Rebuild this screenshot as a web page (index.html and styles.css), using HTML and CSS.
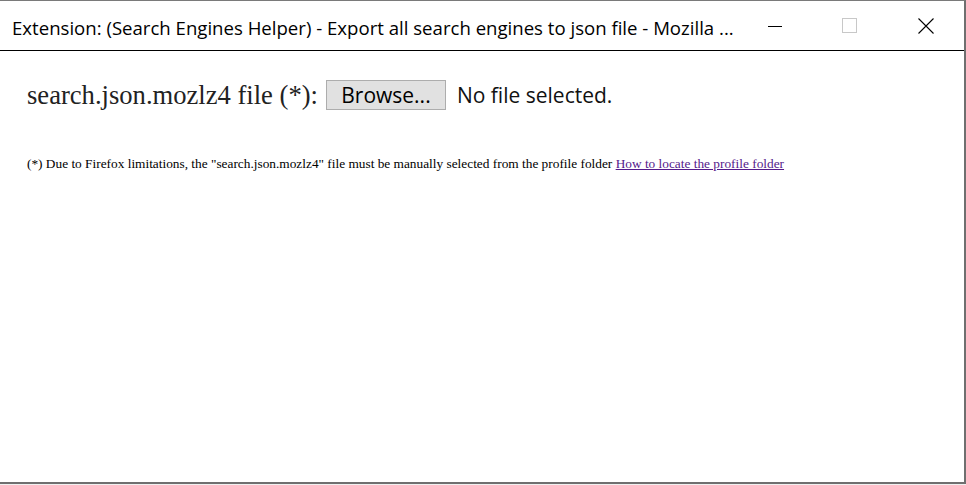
FILE: index.html
```html
<!DOCTYPE html>
<html>
<head>
<meta charset="utf-8">
<link rel="stylesheet" href="styles.css">
</head>
<body>
<div class="window">
  <div class="titlebar">
    <div class="title">Extension: (Search Engines Helper) - Export all search engines to json file - Mozilla ...</div>
    <div class="controls">
      <div class="ctl"><svg width="14" height="14" viewBox="0 0 14 14"><line x1="0" y1="7.5" x2="14" y2="7.5" stroke="#000" stroke-width="1"/></svg></div>
      <div class="ctl"><svg width="15" height="15" viewBox="0 0 15 15"><rect x="0.5" y="0.5" width="14" height="14" fill="none" stroke="#c8c8c8" stroke-width="1"/></svg></div>
      <div class="ctl"><svg width="16" height="16" viewBox="0 0 16 16"><path d="M0.5 0.5 L15.5 15.5 M15.5 0.5 L0.5 15.5" stroke="#000" stroke-width="1.1" fill="none"/></svg></div>
    </div>
  </div>
  <div class="content">
    <div class="row">
      <span class="label">search.json.mozlz4 file (*):</span>
      <span class="button">Browse...</span>
      <span class="nofile">No file selected.</span>
    </div>
    <p class="note">(*) Due to Firefox limitations, the "search.json.mozlz4" file must be manually selected from the profile folder <a href="#" class="link">How to locate the profile folder</a></p>
  </div>
</div>
</body>
</html>
```
FILE: styles.css
```css
html, body {
  margin: 0;
  padding: 0;
  background: #f0f0f0;
}
.window {
  box-sizing: border-box;
  width: 966px;
  height: 484px;
  background: #fff;
  border-top: 1px solid #7a7a7a;
  border-right: 2px solid #6f6f6f;
  border-bottom: 2px solid #6f6f6f;
  display: flex;
  flex-direction: column;
}
.titlebar {
  height: 49px;
  border-bottom: 1px solid #000;
  display: flex;
  align-items: center;
  padding-left: 12px;
}
.title {
  flex: 1;
  font-family: "Open Sans", sans-serif;
  font-size: 18.6px;
  color: #000;
  white-space: nowrap;
  padding-top: 4px;
}
.controls {
  display: flex;
  height: 100%;
  margin-right: -1px;
}
.ctl {
  width: 74px;
  display: flex;
  align-items: center;
  justify-content: center;
}
.ctl:nth-child(2) {
  padding-right: 3px;
}
.ctl:nth-child(3) {
  padding-right: 2px;
}
.content {
  padding: 29px 27px 0 27px;
}
.row {
  display: flex;
  align-items: center;
  height: 30px;
}
.label {
  font-family: "Liberation Serif", serif;
  font-size: 26.6px;
  color: #222;
  margin-right: 8px;
}
.button {
  box-sizing: border-box;
  height: 30px;
  width: 120px;
  background: #e1e1e1;
  border: 1px solid #adadad;
  font-family: "Open Sans", sans-serif;
  font-size: 21px;
  color: #000;
  display: flex;
  align-items: center;
  justify-content: center;
}
.nofile {
  font-family: "Open Sans", sans-serif;
  font-size: 21px;
  color: #111;
  margin-left: 11px;
}
.note {
  margin: 46px 0 0 0;
  font-family: "Liberation Serif", serif;
  font-size: 13.33px;
  color: #000;
}
.link {
  color: #551a8b;
  text-decoration: underline;
}
```
